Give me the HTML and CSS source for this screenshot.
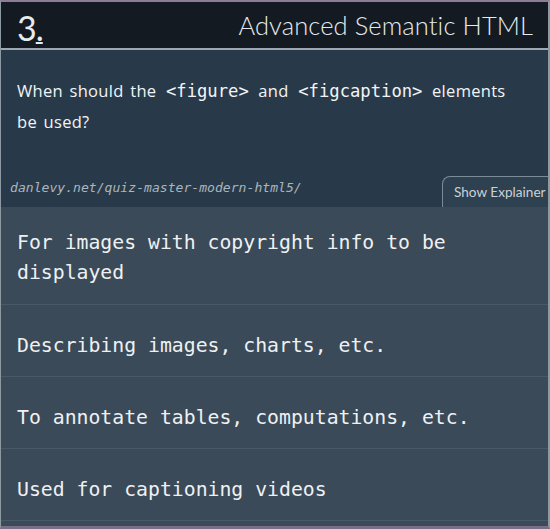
FILE: index.html
```html
<!DOCTYPE html>
<html>
<head>
<meta charset="utf-8">
<link rel="stylesheet" href="styles.css">
</head>
<body>
<div class="card">
  <header class="head">
    <span class="num">3<span class="dot">.</span></span>
    <h1 class="title">Advanced Semantic HTML</h1>
  </header>
  <section class="question">
    <p class="qtext"><span>When should the</span> <code>&lt;figure&gt;</code> <span>and</span> <code>&lt;figcaption&gt;</code> <span>elements</span><br><span>be used?</span></p>
    <div class="qfoot">
      <span class="url">danlevy.net/quiz-master-modern-html5/</span>
      <button class="tab">Show Explainer</button>
    </div>
  </section>
  <ul class="answers">
    <li class="ans ans-two">For images with copyright info to be displayed</li>
    <li class="ans">Describing images, charts, etc.</li>
    <li class="ans">To annotate tables, computations, etc.</li>
    <li class="ans">Used for captioning videos</li>
  </ul>
</div>
</body>
</html>
```
FILE: styles.css
```css
html, body {
  margin: 0;
  padding: 0;
  background: #d8d4dc;
}
body {
  width: 550px;
  height: 529px;
  overflow: hidden;
}
.card {
  border-top: 2px solid #8c7c96;
  border-left: 1px solid #8e9aa3;
  border-right: 2px solid #8e9aa3;
  border-bottom: 3px solid #7d6e88;
  background: #3a4a59;
  height: 524px;
  box-sizing: content-box;
  display: flex;
  flex-direction: column;
}
.head {
  height: 46px;
  background: #131a21;
  border-bottom: 2px solid #9ca7af;
  display: flex;
  justify-content: space-between;
  align-items: flex-start;
  padding: 0 15px 0 16px;
  color: #e6ebee;
  font-family: Lato, "Open Sans", sans-serif;
}
.num {
  font-size: 34px;
  line-height: 34px;
  margin-top: 9px;
  font-weight: 400;
  letter-spacing: -1px;
}
.dot {
  text-decoration: underline;
  text-decoration-thickness: 2px;
  text-underline-offset: 1px;
}
.title {
  margin: 7px 0 0;
  font-size: 25.5px;
  line-height: 32px;
  font-weight: 300;
  letter-spacing: 0.1px;
}
.question {
  background: #283a4a;
  height: 157px;
  display: flex;
  flex-direction: column;
  justify-content: space-between;
}
.qtext {
  margin: 25px 0 0;
  padding: 0 20px 0 16px;
  font-family: "Open Sans", Lato, sans-serif;
  font-size: 16.5px;
  line-height: 31px;
  color: #f2f4f6;
  letter-spacing: 0.3px;
  word-spacing: 2px;
}
.qtext code {
  font-family: "DejaVu Sans Mono", monospace;
  font-size: 17.2px;
  line-height: 20px;
  letter-spacing: 0;
  word-spacing: 0;
  padding: 0 3px;
}
.qfoot {
  display: flex;
  justify-content: space-between;
  align-items: flex-end;
}
.url {
  font-family: "DejaVu Sans Mono", monospace;
  font-style: italic;
  font-size: 13.1px;
  color: #aab5bd;
  margin: 0 0 12px 9px;
}
.tab {
  width: 106px;
  height: 31px;
  padding: 0 0 0 11px;
  text-align: left;
  background: #2e4151;
  border: 1px solid #7b8b97;
  border-right: none;
  border-bottom: none;
  border-radius: 8px 0 0 0;
  font-family: Lato, "Open Sans", sans-serif;
  font-size: 13.6px;
  color: #c9d1d7;
  cursor: pointer;
}
.answers {
  list-style: none;
  margin: 0;
  padding: 0;
}
.ans {
  height: 72px;
  box-sizing: border-box;
  padding: 26px 60px 0 16px;
  border-bottom: 1px solid #4a5968;
  font-family: "DejaVu Sans Mono", monospace;
  font-size: 19.8px;
  line-height: 30px;
  color: #eef1f3;
}
.ans-two {
  height: 98px;
  padding-top: 21px;
}
```
